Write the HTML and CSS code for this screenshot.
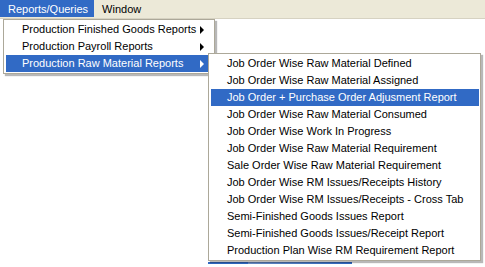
FILE: index.html
```html
<!DOCTYPE html>
<html lang="en">
<head>
  <meta charset="UTF-8">
  <title>Reports/Queries</title>
  <link rel="stylesheet" href="styles.css">
</head>
<body>

<div class="menubar">
  <div class="bar-item active">Reports/Queries</div>
  <div class="bar-item">Window</div>
</div>

<div class="workspace">
  <div class="back-line"></div>

  <div class="menu menu-main">
    <div class="item has-sub">Production Finished Goods Reports</div>
    <div class="item has-sub">Production Payroll Reports</div>
    <div class="item has-sub selected">Production Raw Material Reports</div>
  </div>

  <div class="menu menu-sub">
    <div class="item">Job Order Wise Raw Material Defined</div>
    <div class="item">Job Order Wise Raw Material Assigned</div>
    <div class="item selected">Job Order + Purchase Order Adjusment Report</div>
    <div class="item">Job Order Wise Raw Material Consumed</div>
    <div class="item">Job Order Wise Work In Progress</div>
    <div class="item">Job Order Wise Raw Material Requirement</div>
    <div class="item">Sale Order Wise Raw Material Requirement</div>
    <div class="item">Job Order Wise RM Issues/Receipts History</div>
    <div class="item">Job Order Wise RM Issues/Receipts - Cross Tab</div>
    <div class="item">Semi-Finished Goods Issues Report</div>
    <div class="item">Semi-Finished Goods Issues/Receipt Report</div>
    <div class="item">Production Plan Wise RM Requirement Report</div>
  </div>
</div>

</body>
</html>
```

FILE: styles.css
```css
body {
  margin: 0;
  background: #fff;
  font-family: "Liberation Sans", Arial, sans-serif;
  font-size: 11px;
  color: #000;
}

.menubar {
  display: flex;
  height: 18px;
  background-color: #ece9d8;
  border-bottom: 1px solid #d6d2c2;
}

.bar-item {
  padding: 0 6px 0 8px;
  line-height: 18px;
  height: 17px;
}

.bar-item.active {
  background-color: #316ac5;
  color: #fff;
}

.workspace {
  position: relative;
  height: 248px;
}

.menu {
  position: absolute;
  background: #fff;
  border: 1px solid #aca899;
  padding: 1px 1px 1px 2px;
  box-shadow: 2px 2px 1px rgba(0, 0, 0, 0.28);
}

.menu-main {
  left: 3px;
  top: 0;
  width: 207px;
}

.menu-sub {
  left: 208px;
  top: 34px;
  width: 268px;
}

.item {
  height: 17px;
  line-height: 17px;
  padding-left: 16px;
  white-space: nowrap;
  position: relative;
}

.menu-main .item {
  padding-left: 16px;
}

.item.selected {
  background-color: #316ac5;
  color: #fff;
}

.has-sub::after {
  content: "";
  position: absolute;
  right: 9px;
  top: 5px;
  border-left: 4px solid #000;
  border-top: 4px solid transparent;
  border-bottom: 4px solid transparent;
}

.has-sub.selected::after {
  border-left-color: #fff;
}

.back-line {
  position: absolute;
  left: 208px;
  top: 243px;
  width: 144px;
  height: 2px;
  background: linear-gradient(to right, #316ac5 0, #316ac5 40px, #6b8fc9 40px, #316ac5 100%);
}
```
